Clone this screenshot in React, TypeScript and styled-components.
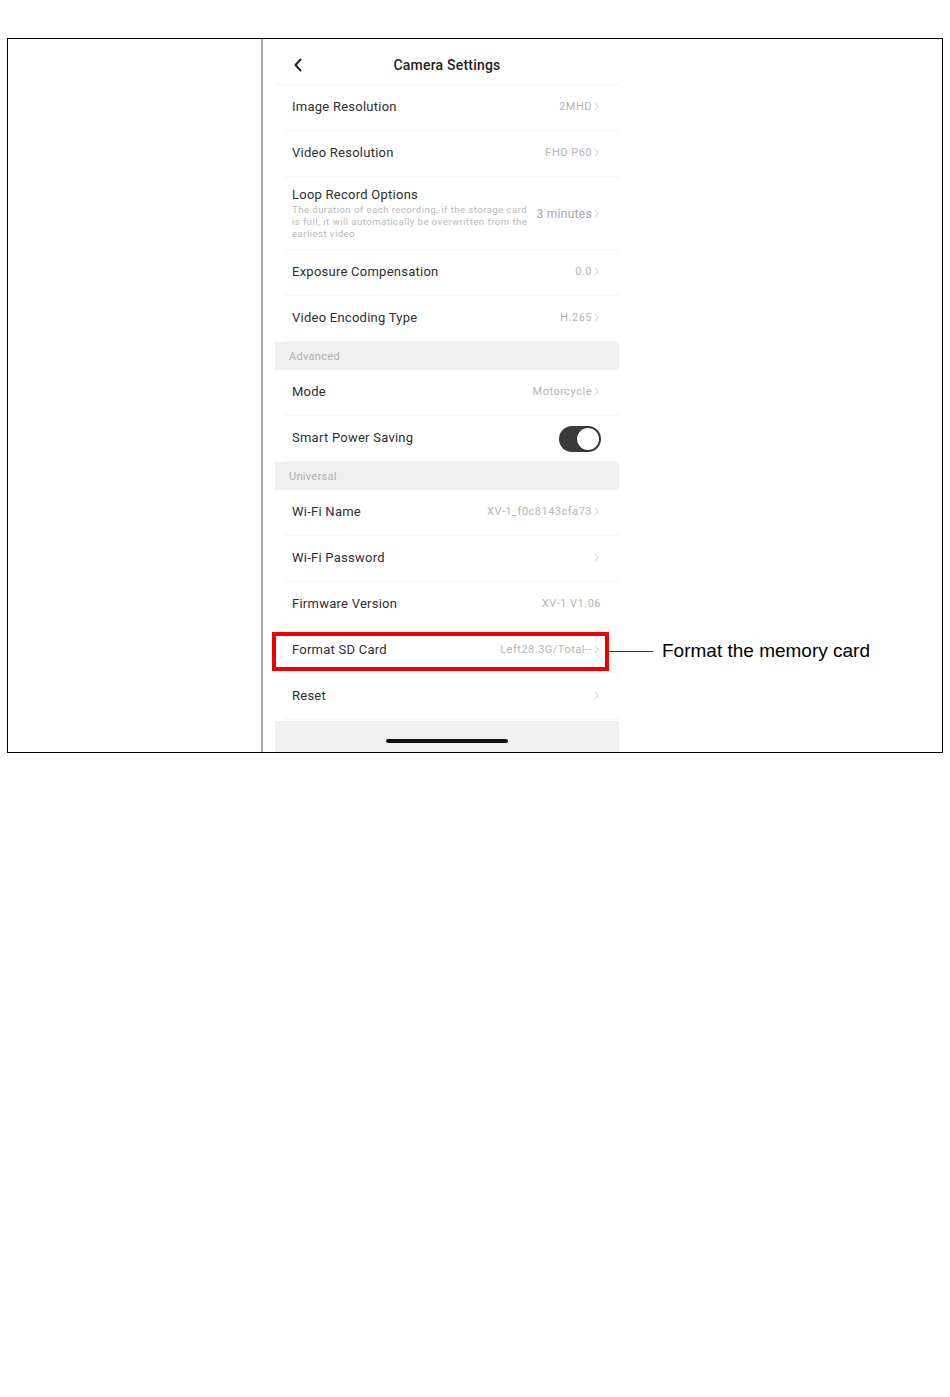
import React from 'react';
import styled, { createGlobalStyle } from 'styled-components';

const GlobalStyle = createGlobalStyle`
  html, body {
    margin: 0;
    padding: 0;
    background: #ffffff;
  }
  body {
    font-family: Roboto, 'Liberation Sans', Arial, sans-serif;
  }
`;

const Page = styled.div`
  width: 950px;
  height: 1397px;
  padding: 38px 0 0 7px;
  box-sizing: border-box;
`;

const Table = styled.div`
  display: grid;
  grid-template-columns: 255px 1fr;
  width: 936px;
  height: 715px;
  box-sizing: border-box;
  border: 1px solid #000;
`;

const LeftCell = styled.div`
  border-right: 2px solid #a6a6a6;
`;

const RightCell = styled.div`
  padding-left: 12px;
  display: flex;
  overflow: hidden;
`;

const Phone = styled.div`
  width: 344px;
  display: flex;
  flex-direction: column;
  background: #fff;
  color: #333;
`;

const Header = styled.div`
  height: 46px;
  display: flex;
  align-items: center;
  padding: 6px 0 0 18px;
  box-sizing: border-box;
  border-bottom: 1px solid #f4f4f4;
`;

const BackButton = styled.svg`
  width: 10px;
  height: 14px;
`;

const Title = styled.div`
  flex: 1;
  text-align: center;
  margin-left: -28px;
  font-size: 14px;
  font-weight: 500;
  letter-spacing: 0.2px;
  color: #222;
`;

const Row = styled.div<{ tall?: boolean }>`
  height: ${(p) => (p.tall ? '73px' : '46px')};
  display: flex;
  align-items: center;
  justify-content: space-between;
  padding: ${(p) => (p.tall ? '0 18px 0 17px' : '0 18px 3px 17px')};
  box-sizing: border-box;
  position: relative;
  &::after {
    content: '';
    position: absolute;
    left: 10px;
    right: 0;
    bottom: 0;
    height: 1px;
    background: #f4f4f4;
  }
`;

const LabelBlock = styled.div`
  display: flex;
  flex-direction: column;
`;

const Label = styled.div`
  font-size: 13px;
  letter-spacing: 0.25px;
  color: #2e2e2e;
`;

const Description = styled.div`
  font-size: 9.6px;
  line-height: 12px;
  letter-spacing: 0.45px;
  color: #b8b8b8;
  margin-top: 2px;
  white-space: nowrap;
`;

const Value = styled.div<{ large?: boolean }>`
  display: flex;
  align-items: center;
  font-size: ${(p) => (p.large ? '12px' : '11px')};
  letter-spacing: ${(p) => (p.large ? '0.3px' : '0.5px')};
  color: ${(p) => (p.large ? '#a5a5a5' : '#b4b4b4')};
  font-variant-ligatures: none;
  white-space: nowrap;
`;

const Chevron = styled.svg`
  width: 8px;
  height: 9px;
  margin-left: 1px;
`;

const Section = styled.div`
  height: 28px;
  background: #efefef;
  display: flex;
  align-items: center;
  padding-left: 14px;
  font-size: 11px;
  letter-spacing: 0.3px;
  color: #b0b0b0;
`;

const Toggle = styled.div`
  width: 42px;
  height: 26px;
  border-radius: 13px;
  background: #3a3a3a;
  display: flex;
  justify-content: flex-end;
  align-items: center;
  padding: 2px;
  box-sizing: border-box;
  margin-top: 3px;
`;

const Knob = styled.div`
  width: 22px;
  height: 22px;
  border-radius: 50%;
  background: #fff;
  box-shadow: 0 0 0 1px #2c2c2c;
`;

const Highlight = styled.div`
  position: absolute;
  left: -3px;
  right: 10px;
  top: 4px;
  bottom: 3px;
  border: 4px solid #ee0000;
`;

const Callout = styled.div`
  position: absolute;
  left: 334px;
  top: 50%;
  transform: translateY(-50%);
  display: flex;
  align-items: center;
  white-space: nowrap;
`;

const CalloutLine = styled.div`
  width: 44px;
  height: 1px;
  background: #b00000;
  margin-right: 9px;
`;

const CalloutText = styled.div`
  font-family: 'Liberation Sans', Arial, sans-serif;
  font-size: 19px;
  color: #000;
`;

const BottomBar = styled.div`
  flex: 1;
  background: #efefef;
  display: flex;
  justify-content: center;
  align-items: flex-end;
  padding-bottom: 9px;
  margin-top: 1px;
`;

const HomeIndicator = styled.div`
  width: 122px;
  height: 4px;
  border-radius: 2px;
  background: #111;
`;

const Arrow = () => (
  <Chevron viewBox="0 0 8 9">
    <path d="M2 1 L5 4.5 L2 8" fill="none" stroke="#c8c8c8" strokeWidth="1" />
  </Chevron>
);

type Item = { label: string; value?: string; chevron?: boolean };

const SettingRow = ({ label, value, chevron = true }: Item) => (
  <Row>
    <Label>{label}</Label>
    <Value>
      {value}
      {chevron && <Arrow />}
    </Value>
  </Row>
);

export default function App() {
  return (
    <>
      <GlobalStyle />
      <Page>
        <Table>
          <LeftCell />
          <RightCell>
            <Phone>
              <Header>
                <BackButton viewBox="0 0 10 14">
                  <path d="M7.5 1.5 L2.5 7 L7.5 12.5" fill="none" stroke="#222" strokeWidth="2" strokeLinecap="round" strokeLinejoin="round" />
                </BackButton>
                <Title>Camera Settings</Title>
              </Header>
              <SettingRow label="Image Resolution" value="2MHD" />
              <SettingRow label="Video Resolution" value="FHD P60" />
              <Row tall>
                <LabelBlock>
                  <Label>Loop Record Options</Label>
                  <Description>
                    The duration of each recording, if the storage card
                    <br />
                    is full, it will automatically be overwritten from the
                    <br />
                    earliest video
                  </Description>
                </LabelBlock>
                <Value large>
                  3 minutes
                  <Arrow />
                </Value>
              </Row>
              <SettingRow label="Exposure Compensation" value="0.0" />
              <SettingRow label="Video Encoding Type" value="H.265" />
              <Section>Advanced</Section>
              <SettingRow label="Mode" value="Motorcycle" />
              <Row>
                <Label>Smart Power Saving</Label>
                <Toggle>
                  <Knob />
                </Toggle>
              </Row>
              <Section>Universal</Section>
              <SettingRow label="Wi-Fi Name" value="XV-1_f0c8143cfa73" />
              <SettingRow label="Wi-Fi Password" value="" />
              <SettingRow label="Firmware Version" value="XV-1 V1.06" chevron={false} />
              <Row>
                <Label>Format SD Card</Label>
                <Value>
                  Left28.3G/Total--
                  <Arrow />
                </Value>
                <Highlight />
                <Callout>
                  <CalloutLine />
                  <CalloutText>Format the memory card</CalloutText>
                </Callout>
              </Row>
              <SettingRow label="Reset" value="" />
              <BottomBar>
                <HomeIndicator />
              </BottomBar>
            </Phone>
          </RightCell>
        </Table>
      </Page>
    </>
  );
}
